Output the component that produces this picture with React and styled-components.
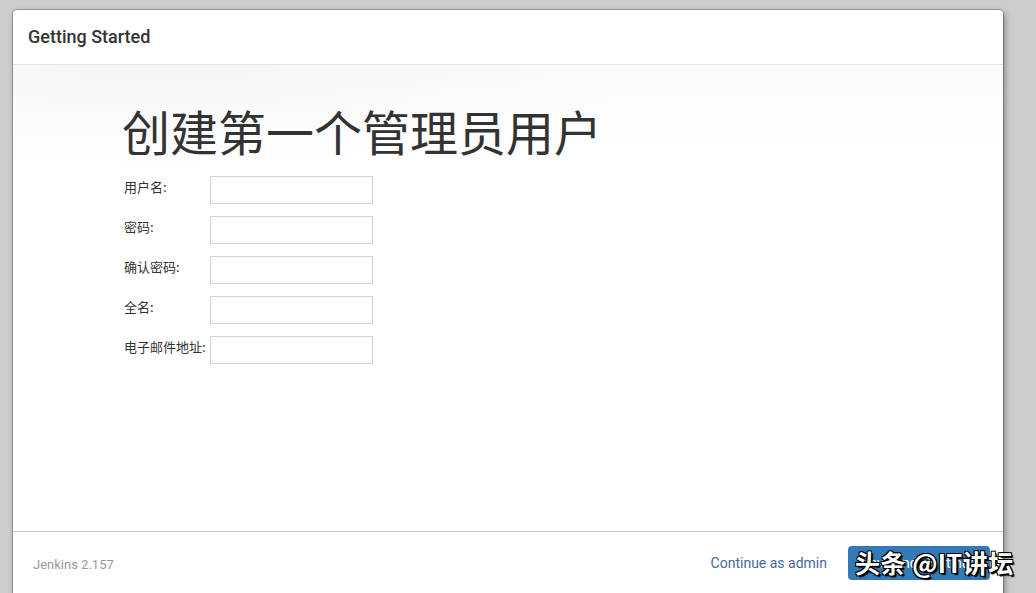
import React from "react";
import styled, { createGlobalStyle } from "styled-components";

const Global = createGlobalStyle`
  html, body { margin: 0; padding: 0; }
  body {
    background: #cccccc;
    font-family: Roboto, "Noto Sans CJK SC", "Liberation Sans", sans-serif;
    color: #333;
    overflow: hidden;
  }
`;

const Page = styled.div`
  position: relative;
  width: 1036px;
  height: 593px;
  overflow: hidden;
  padding: 10px 33px 0 13px;
  box-sizing: border-box;
`;

const Modal = styled.div`
  width: 990px;
  height: 600px;
  background: #fff;
  border-radius: 4px 4px 0 0;
  box-shadow: 0 0 0 1px rgba(0, 0, 0, 0.25), 2px 3px 6px rgba(0, 0, 0, 0.35);
  display: flex;
  flex-direction: column;
`;

const Header = styled.div`
  height: 55px;
  flex: none;
  border-bottom: 1px solid #e5e5e5;
  display: flex;
  align-items: center;
  padding: 0 15px 1px;
  box-sizing: border-box;
`;

const HeaderTitle = styled.h4`
  margin: 0;
  font-size: 18px;
  font-weight: 500;
  color: #333;
`;

const Body = styled.div`
  height: 467px;
  flex: none;
  box-sizing: border-box;
  padding: 39px 0 0 109px;
  background:
    radial-gradient(ellipse 520px 110px at 15% 0%, rgba(0,0,0,0.022), rgba(0,0,0,0) 100%),
    linear-gradient(to bottom, #fbfbfb, #ffffff 90px);
  border-bottom: 1px solid #c8c8c8;
`;

const Title = styled.h1`
  margin: 0 0 19px;
  font-family: "Noto Sans CJK SC", sans-serif;
  font-weight: 400;
  font-size: 48px;
  line-height: 1.1;
  color: #333;
`;

const Form = styled.div`
  display: grid;
  grid-template-columns: 86px 163px;
  row-gap: 12px;
  padding-left: 2px;
`;

const Label = styled.label`
  font-family: "Noto Sans CJK SC", sans-serif;
  font-size: 13px;
  color: #333;
  line-height: 28px;
  margin-top: -3px;
  white-space: nowrap;
`;

const Input = styled.input`
  width: 163px;
  height: 28px;
  box-sizing: border-box;
  border: 1px solid #d3d3d3;
  background: #fff;
  margin: 0;
  padding: 2px 4px;
  font-size: 13px;
  outline: none;
`;

const Footer = styled.div`
  height: 62px;
  flex: none;
  display: flex;
  align-items: center;
  padding: 0 13px 0 20px;
  box-sizing: border-box;
`;

const Version = styled.span`
  font-size: 13px;
  color: #999;
  margin-top: 2px;
`;

const Spacer = styled.div`
  flex: 1;
`;

const LinkButton = styled.a`
  font-size: 14px;
  color: #46699a;
  text-decoration: none;
  margin-right: 21px;
  cursor: pointer;
`;

const PrimaryButton = styled.button`
  width: 142px;
  height: 34px;
  border: none;
  border-radius: 4px;
  background: #337ab7;
  color: #fff;
  font-family: Roboto, sans-serif;
  font-size: 14px;
  padding: 0;
  cursor: pointer;
`;

const Watermark = styled.div`
  position: absolute;
  left: 855px;
  top: 545px;
  font-family: "Noto Sans CJK SC", sans-serif;
  font-weight: 700;
  font-size: 25px;
  line-height: 34px;
  color: #fff;
  letter-spacing: 0.5px;
  white-space: nowrap;
  text-shadow:
    1px 1px 0 #000, -1px 1px 0 #000, 1px -1px 0 #000, -1px -1px 0 #000,
    2px 2px 1px #000;
  pointer-events: none;
`;

const fields = ["用户名:", "密码:", "确认密码:", "全名:", "电子邮件地址:"];

export default function App() {
  return (
    <>
      <Global />
      <Page>
        <Modal>
          <Header>
            <HeaderTitle>Getting Started</HeaderTitle>
          </Header>
          <Body>
            <Title>创建第一个管理员用户</Title>
            <Form>
              {fields.map((f) => (
                <React.Fragment key={f}>
                  <Label>{f}</Label>
                  <Input type={f.includes("密码") ? "password" : "text"} />
                </React.Fragment>
              ))}
            </Form>
          </Body>
          <Footer>
            <Version>Jenkins 2.157</Version>
            <Spacer />
            <LinkButton>Continue as admin</LinkButton>
            <PrimaryButton>Save and Continue</PrimaryButton>
          </Footer>
        </Modal>
        <Watermark>头条 @IT讲坛</Watermark>
      </Page>
    </>
  );
}
